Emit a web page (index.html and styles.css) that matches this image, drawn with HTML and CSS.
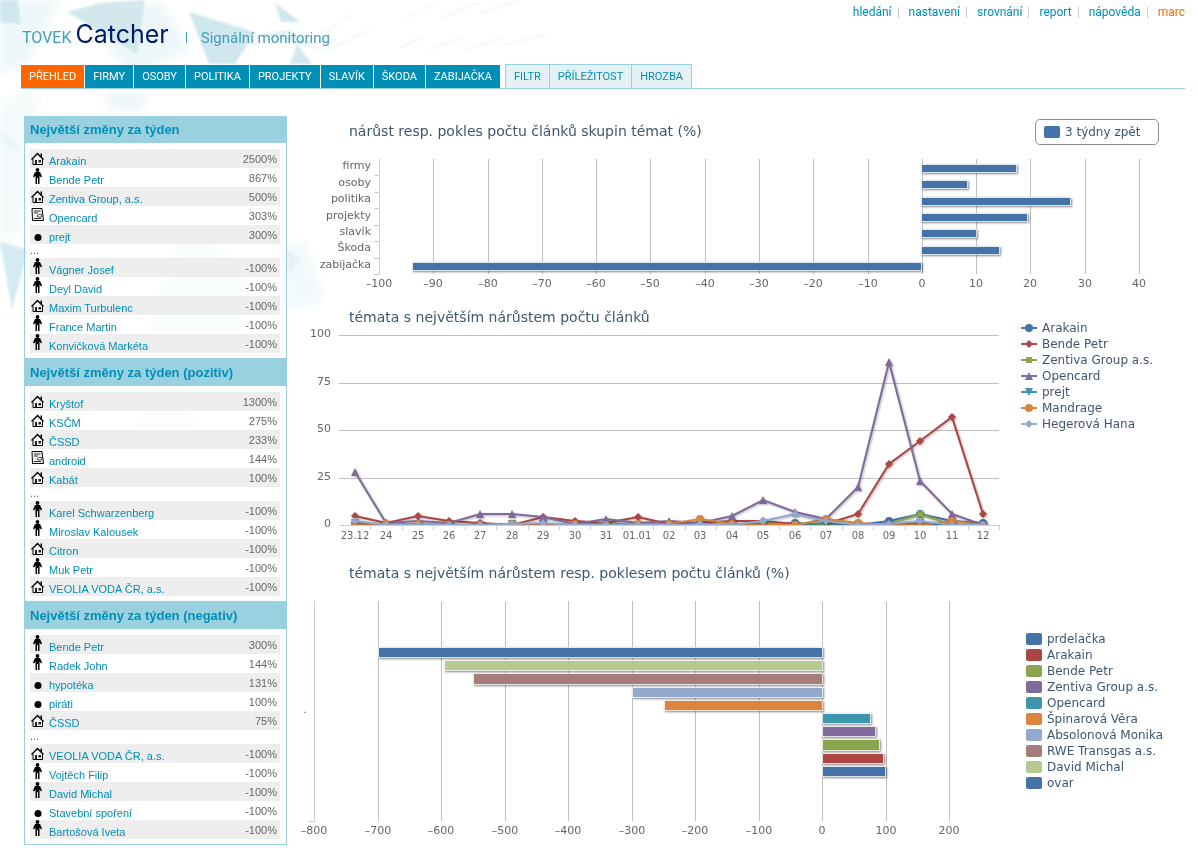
FILE: index.html
```html
<!DOCTYPE html>
<html lang="cs">
<head>
<meta charset="utf-8">
<title>TOVEK Catcher | Signální monitoring</title>
<link rel="stylesheet" href="styles.css">
</head>
<body>
<svg class="backdrop" width="640" height="520" viewBox="0 0 640 520" aria-hidden="true">
  <defs>
    <filter id="soft" x="-5%" y="-5%" width="110%" height="110%"><feGaussianBlur stdDeviation="1"/></filter>
    <filter id="haze" x="-20%" y="-20%" width="140%" height="140%"><feGaussianBlur stdDeviation="5"/></filter>
  </defs>
  <g filter="url(#haze)" fill="#edf7f9">
    <path d="M0 0H60L30 60L0 75Z"/>
    <path d="M90 25L160 0L190 50L130 75Z"/>
    <path d="M0 100L40 90L20 230L0 260Z" opacity=".6"/>
    <path d="M110 90L150 95L140 112L105 110Z"/>
    <path d="M286 245L305 240L325 300L286 312Z" opacity=".7"/>
    <path d="M180 225L250 270L240 330L150 330Z" opacity=".7"/>
    <path d="M20 400L75 370L90 430Z" opacity=".5"/>
    <path d="M130 430L170 370L200 430Z" opacity=".5"/>
  </g>
  <g filter="url(#soft)">
    <path d="M0 0H18L20 24L0 22Z" fill="#cfe7ed"/>
    <path d="M67 12L100 3L145 0L137 54Z" fill="#d2e8ed"/>
    <path d="M189 12L255 32L235 64H209Z" fill="#d0e7ed"/>
    <path d="M255 34L340 54L312 46L290 30Z" fill="#e4f1f5"/>
    <path d="M275 3L300 22L281 22Z" fill="#cfe7ed"/>
    <path d="M297 44L312 64H290Z" fill="#d2e8ee"/>
    <path d="M0 242L28 250L12 310Z" fill="#d4ebf1"/>
    <path d="M0 130L20 145L14 150L0 142Z" fill="#eaf5f8"/>
    <path d="M287 250L300 260L288 276Z" fill="#e2f2f6"/>
  </g>
  <g filter="url(#soft)" stroke="#f1f7f9" stroke-width="2">
    <path d="M320 35L350 15M330 50L370 30M406 19L434 3M442 18L478 2M480 13L520 0M400 48L422 37M430 49L462 38M466 49L504 38M503 46L546 34" fill="none"/>
  </g>
</svg>
<svg class="sprite" aria-hidden="true">
  <symbol id="house" viewBox="0 0 13 16">
    <path d="M9.500 4.500H11V9L9.500 7.500Z" fill="#000"/>
    <path d="M6.500 4.500L11.500 9.500V15.500H1.500V9.500Z" fill="#f4f4f4"/>
    <path d="M2 10V15.500H11.500V10" fill="none" stroke="#000"/>
    <path d="M0.500 10.500L6.500 4.500L12.500 10.500" fill="none" stroke="#000" stroke-width="1.500"/>
    <path d="M4 11H6V15.500H4ZM7.500 11H10V13.500H7.500Z" fill="#222"/>
  </symbol>
  <symbol id="person" viewBox="0 0 13 16">
    <circle cx="6.500" cy="2" r="1.900"/>
    <path d="M4 4H9L11 8.500L10 9.500L8.500 7.500V16H7V10H6V16H4.500V7.500L3 9.500L2 8.500Z"/>
  </symbol>
  <symbol id="paper" viewBox="0 0 13 16">
    <path d="M1 2.500H11L12.500 14.500H1.500Z" fill="#eee" stroke="#000"/>
    <path d="M3 5H9.500M3 7H7M3 12.500H10" stroke="#333" fill="none"/>
    <path d="M6 10L8 8.500H10.500V11H7Z" stroke="#555" fill="#fff"/>
  </symbol>
  <symbol id="dot" viewBox="0 0 13 16"><circle cx="7" cy="12.500" r="3.500"/></symbol>
</svg>

<header class="top">
  <nav class="menu" aria-label="Účet">
    <a href="#">hledání</a><a href="#">nastavení</a><a href="#">srovnání</a><a href="#">report</a><a href="#">nápověda</a><a href="#" class="user">marc</a>
  </nav>
  <div class="brand">
    <span class="maker">TOVEK</span><span class="product">Catcher</span><span class="bar"></span><span class="claim">Signální monitoring</span>
  </div>
  <nav class="tabs" aria-label="Témata">
    <a href="#" class="tab active">PŘEHLED</a><a href="#" class="tab">FIRMY</a><a href="#" class="tab">OSOBY</a><a href="#" class="tab">POLITIKA</a><a href="#" class="tab">PROJEKTY</a><a href="#" class="tab">SLAVÍK</a><a href="#" class="tab">ŠKODA</a><a href="#" class="tab">ZABIJAČKA</a>
    <div class="extra"><a href="#" class="tab light">FILTR</a><a href="#" class="tab light">PŘÍLEŽITOST</a><a href="#" class="tab light">HROZBA</a></div>
  </nav>
</header>

<main class="page">
  <aside class="side">
    <section>
      <h2>Největší změny za týden</h2>
      <table>
        <tbody>
        <tr><td><svg><use href="#house"/></svg></td><td><a href="#">Arakain</a></td><td>2500%</td></tr>
        <tr><td><svg><use href="#person"/></svg></td><td><a href="#">Bende Petr</a></td><td>867%</td></tr>
        <tr><td><svg><use href="#house"/></svg></td><td><a href="#">Zentiva Group, a.s.</a></td><td>500%</td></tr>
        <tr><td><svg><use href="#paper"/></svg></td><td><a href="#">Opencard</a></td><td>303%</td></tr>
        <tr><td><svg><use href="#dot"/></svg></td><td><a href="#">prejt</a></td><td>300%</td></tr>
        </tbody>
        <tbody class="more"><tr><td colspan="3">...</td></tr></tbody>
        <tbody>
        <tr><td><svg><use href="#person"/></svg></td><td><a href="#">Vágner Josef</a></td><td>-100%</td></tr>
        <tr><td><svg><use href="#person"/></svg></td><td><a href="#">Deyl David</a></td><td>-100%</td></tr>
        <tr><td><svg><use href="#house"/></svg></td><td><a href="#">Maxim Turbulenc</a></td><td>-100%</td></tr>
        <tr><td><svg><use href="#person"/></svg></td><td><a href="#">France Martin</a></td><td>-100%</td></tr>
        <tr><td><svg><use href="#person"/></svg></td><td><a href="#">Konvičková Markéta</a></td><td>-100%</td></tr>
        </tbody>
      </table>
    </section>
    <section>
      <h2>Největší změny za týden (pozitiv)</h2>
      <table>
        <tbody>
        <tr><td><svg><use href="#house"/></svg></td><td><a href="#">Kryštof</a></td><td>1300%</td></tr>
        <tr><td><svg><use href="#house"/></svg></td><td><a href="#">KSČM</a></td><td>275%</td></tr>
        <tr><td><svg><use href="#house"/></svg></td><td><a href="#">ČSSD</a></td><td>233%</td></tr>
        <tr><td><svg><use href="#paper"/></svg></td><td><a href="#">android</a></td><td>144%</td></tr>
        <tr><td><svg><use href="#house"/></svg></td><td><a href="#">Kabát</a></td><td>100%</td></tr>
        </tbody>
        <tbody class="more"><tr><td colspan="3">...</td></tr></tbody>
        <tbody>
        <tr><td><svg><use href="#person"/></svg></td><td><a href="#">Karel Schwarzenberg</a></td><td>-100%</td></tr>
        <tr><td><svg><use href="#person"/></svg></td><td><a href="#">Miroslav Kalousek</a></td><td>-100%</td></tr>
        <tr><td><svg><use href="#house"/></svg></td><td><a href="#">Citron</a></td><td>-100%</td></tr>
        <tr><td><svg><use href="#person"/></svg></td><td><a href="#">Muk Petr</a></td><td>-100%</td></tr>
        <tr><td><svg><use href="#house"/></svg></td><td><a href="#">VEOLIA VODA ČR, a.s.</a></td><td>-100%</td></tr>
        </tbody>
      </table>
    </section>
    <section>
      <h2>Největší změny za týden (negativ)</h2>
      <table>
        <tbody>
        <tr><td><svg><use href="#person"/></svg></td><td><a href="#">Bende Petr</a></td><td>300%</td></tr>
        <tr><td><svg><use href="#person"/></svg></td><td><a href="#">Radek John</a></td><td>144%</td></tr>
        <tr><td><svg><use href="#dot"/></svg></td><td><a href="#">hypotéka</a></td><td>131%</td></tr>
        <tr><td><svg><use href="#dot"/></svg></td><td><a href="#">piráti</a></td><td>100%</td></tr>
        <tr><td><svg><use href="#house"/></svg></td><td><a href="#">ČSSD</a></td><td>75%</td></tr>
        </tbody>
        <tbody class="more"><tr><td colspan="3">...</td></tr></tbody>
        <tbody>
        <tr><td><svg><use href="#house"/></svg></td><td><a href="#">VEOLIA VODA ČR, a.s.</a></td><td>-100%</td></tr>
        <tr><td><svg><use href="#person"/></svg></td><td><a href="#">Vojtěch Filip</a></td><td>-100%</td></tr>
        <tr><td><svg><use href="#person"/></svg></td><td><a href="#">David Michal</a></td><td>-100%</td></tr>
        <tr><td><svg><use href="#dot"/></svg></td><td><a href="#">Stavební spoření</a></td><td>-100%</td></tr>
        <tr><td><svg><use href="#person"/></svg></td><td><a href="#">Bartošová Iveta</a></td><td>-100%</td></tr>
        </tbody>
      </table>
    </section>
  </aside>

  <div class="charts">
    <section class="chart">
      <div class="chart-head">
        <h3>nárůst resp. pokles počtu článků skupin témat (%)</h3>
        <div class="key"><i class="swatch c1"></i>3 týdny zpět</div>
      </div>
      <svg class="plot" viewBox="0 0 885 142">
        <path class="grid" d="M133.500 9V124M188.500 9V124M242.500 9V124M296.500 9V124M350.500 9V124M405.500 9V124M459.500 9V124M513.500 9V124M568.500 9V124M622.500 9V124M676.500 9V124M730.500 9V124M785.500 9V124M839.500 9V124"/>
        <path class="axis" d="M79.500 9V124M74 25.500H79M74 42.500H79M74 58.500H79M74 75.500H79M74 91.500H79M74 108.500H79M74 124.500H80"/>
        <g class="bars c1">
          <rect x="621.500" y="14.500" width="95" height="8"/>
          <rect x="621.500" y="30.500" width="46" height="8"/>
          <rect x="621.500" y="47.500" width="149" height="8"/>
          <rect x="621.500" y="63.500" width="106" height="8"/>
          <rect x="621.500" y="79.500" width="55" height="8"/>
          <rect x="621.500" y="96.500" width="78" height="8"/>
          <rect x="112.500" y="112.500" width="509" height="8"/>
        </g>
        <g class="lbl end">
          <text x="71" y="19">firmy</text><text x="71" y="36">osoby</text><text x="71" y="52">politika</text><text x="71" y="69">projekty</text><text x="71" y="85">slavík</text><text x="71" y="101">Škoda</text><text x="71" y="118">zabijačka</text>
        </g>
        <g class="lbl mid">
          <text x="79" y="137">–100</text><text x="133" y="137">–90</text><text x="188" y="137">–80</text><text x="242" y="137">–70</text><text x="296" y="137">–60</text><text x="350" y="137">–50</text><text x="405" y="137">–40</text><text x="459" y="137">–30</text><text x="513" y="137">–20</text><text x="568" y="137">–10</text><text x="622" y="137">0</text><text x="676" y="137">10</text><text x="730" y="137">20</text><text x="785" y="137">30</text><text x="839" y="137">40</text>
        </g>
      </svg>
    </section>

    <section class="chart split">
      <div>
        <h3>témata s největším nárůstem počtu článků</h3>
        <svg class="plot" viewBox="0 0 712 218">
          <defs>
            <marker id="m1" markerUnits="userSpaceOnUse" markerWidth="10" markerHeight="10" refX="5" refY="5"><circle cx="5" cy="5" r="4" fill="#4572a7"/></marker>
            <marker id="m2" markerUnits="userSpaceOnUse" markerWidth="10" markerHeight="10" refX="5" refY="5"><path d="M5 1L9 5L5 9L1 5Z" fill="#aa4643"/></marker>
            <marker id="m3" markerUnits="userSpaceOnUse" markerWidth="10" markerHeight="10" refX="5" refY="5"><path d="M2 2H8V8H2Z" fill="#89a54e"/></marker>
            <marker id="m4" markerUnits="userSpaceOnUse" markerWidth="10" markerHeight="10" refX="5" refY="5"><path d="M5 1L9 9H1Z" fill="#80699b"/></marker>
            <marker id="m5" markerUnits="userSpaceOnUse" markerWidth="10" markerHeight="10" refX="5" refY="5"><path d="M1 1H9L5 9Z" fill="#3d96ae"/></marker>
            <marker id="m6" markerUnits="userSpaceOnUse" markerWidth="10" markerHeight="10" refX="5" refY="5"><circle cx="5" cy="5" r="4" fill="#db843d"/></marker>
            <marker id="m7" markerUnits="userSpaceOnUse" markerWidth="10" markerHeight="10" refX="5" refY="5"><path d="M5 1L9 5L5 9L1 5Z" fill="#92a8cd"/></marker>
            <clipPath id="area"><rect x="39" y="0" width="660" height="199"/></clipPath>
          </defs>
          <path class="grid" d="M39 8.500H699M39 56.500H699M39 103.500H699M39 151.500H699"/>
          <g class="lines" clip-path="url(#area)">
            <polyline class="s1" points="55,197 86,198 118,198 149,198 180,198 212,198 243,198 275,198 306,198 338,198 369,198 400,198 432,198 463,198 495,196 526,198 558,198 589,194 620,187 652,194 683,196"/>
            <polyline class="s2" points="55,189 86,196 118,189 149,194 180,196 212,198 243,190 275,194 306,196 338,190 369,197 400,196 432,194 463,194 495,197 526,197 558,187 589,137 620,114 652,90 683,187"/>
            <polyline class="s3" points="55,196 86,198 118,198 149,198 180,198 212,198 243,198 275,198 306,196 338,198 369,198 400,198 432,198 463,196 495,198 526,198 558,198 589,197 620,187 652,198 683,198"/>
            <polyline class="s4" points="55,145 86,196 118,194 149,196 180,187 212,187 243,190 275,197 306,192 338,196 369,194 400,196 432,189 463,173 495,185 526,192 558,160 589,35 620,154 652,187 683,198"/>
            <polyline class="s5" points="55,196 86,198 118,198 149,198 180,198 212,197 243,198 275,198 306,198 338,198 369,198 400,198 432,198 463,198 495,198 526,196 558,198 589,198 620,196 652,198 683,198"/>
            <polyline class="s6" points="55,198 86,197 118,197 149,198 180,198 212,197 243,198 275,197 306,198 338,197 369,197 400,192 432,197 463,198 495,198 526,192 558,196 589,198 620,198 652,194 683,198"/>
            <polyline class="s7" points="55,194 86,198 118,198 149,198 180,198 212,197 243,196 275,198 306,198 338,198 369,198 400,197 432,198 463,194 495,187 526,194 558,198 589,197 620,194 652,198 683,198"/>
          </g>
          <path class="axis" d="M39 198.500H700M70.500 199V203M102.500 199V203M133.500 199V203M165.500 199V203M196.500 199V203M228.500 199V203M259.500 199V203M290.500 199V203M322.500 199V203M353.500 199V203M385.500 199V203M416.500 199V203M448.500 199V203M479.500 199V203M510.500 199V203M542.500 199V203M573.500 199V203M605.500 199V203M636.500 199V203M668.500 199V203M699.500 199V203"/>
          <g class="lbl end">
            <text x="31" y="10">100</text><text x="31" y="58">75</text><text x="31" y="105">50</text><text x="31" y="153">25</text><text x="31" y="200">0</text>
          </g>
          <g class="lbl mid small">
            <text x="55" y="212">23.12</text><text x="86" y="212">24</text><text x="118" y="212">25</text><text x="149" y="212">26</text><text x="180" y="212">27</text><text x="212" y="212">28</text><text x="243" y="212">29</text><text x="275" y="212">30</text><text x="306" y="212">31</text><text x="337" y="212">01.01</text><text x="369" y="212">02</text><text x="400" y="212">03</text><text x="432" y="212">04</text><text x="463" y="212">05</text><text x="495" y="212">06</text><text x="526" y="212">07</text><text x="558" y="212">08</text><text x="589" y="212">09</text><text x="620" y="212">10</text><text x="652" y="212">11</text><text x="683" y="212">12</text>
          </g>
        </svg>
      </div>
      <ul class="legend series">
        <li><svg viewBox="0 0 16 10"><path class="s1" d="M0 5H8H16"/></svg>Arakain</li>
        <li><svg viewBox="0 0 16 10"><path class="s2" d="M0 5H8H16"/></svg>Bende Petr</li>
        <li><svg viewBox="0 0 16 10"><path class="s3" d="M0 5H8H16"/></svg>Zentiva Group a.s.</li>
        <li><svg viewBox="0 0 16 10"><path class="s4" d="M0 5H8H16"/></svg>Opencard</li>
        <li><svg viewBox="0 0 16 10"><path class="s5" d="M0 5H8H16"/></svg>prejt</li>
        <li><svg viewBox="0 0 16 10"><path class="s6" d="M0 5H8H16"/></svg>Mandrage</li>
        <li><svg viewBox="0 0 16 10"><path class="s7" d="M0 5H8H16"/></svg>Hegerová Hana</li>
      </ul>
    </section>

    <section class="chart split">
      <div>
        <h3>témata s největším nárůstem resp. poklesem počtu článků (%)</h3>
        <svg class="plot" viewBox="0 0 712 255">
          <path class="grid" d="M78.500 18V238M141.500 18V238M205.500 18V238M268.500 18V238M332.500 18V238M395.500 18V238M459.500 18V238M522.500 18V238M586.500 18V238M649.500 18V238"/>
          <path class="axis" d="M14.500 18V238M9 238.500H15"/>
          <g class="bars">
            <rect class="c1" x="78.500" y="64.500" width="444" height="10"/>
            <rect class="c9" x="144.500" y="77.500" width="378" height="10"/>
            <rect class="c8" x="173.500" y="90.500" width="349" height="11"/>
            <rect class="c7" x="332.500" y="104.500" width="190" height="10"/>
            <rect class="c6" x="364.500" y="117.500" width="158" height="10"/>
            <rect class="c5" x="522.500" y="130.500" width="48" height="10"/>
            <rect class="c4" x="522.500" y="143.500" width="53" height="10"/>
            <rect class="c3" x="522.500" y="156.500" width="57" height="11"/>
            <rect class="c2" x="522.500" y="170.500" width="61" height="10"/>
            <rect class="c1" x="522.500" y="183.500" width="63" height="10"/>
          </g>
          <g class="lbl mid">
            <text x="5" y="130">.</text>
            <text x="14" y="251">–800</text><text x="78" y="251">–700</text><text x="141" y="251">–600</text><text x="205" y="251">–500</text><text x="268" y="251">–400</text><text x="332" y="251">–300</text><text x="395" y="251">–200</text><text x="459" y="251">–100</text><text x="522" y="251">0</text><text x="586" y="251">100</text><text x="649" y="251">200</text>
          </g>
        </svg>
      </div>
      <ul class="legend blocks">
        <li><i class="swatch c1"></i>prdelačka</li>
        <li><i class="swatch c2"></i>Arakain</li>
        <li><i class="swatch c3"></i>Bende Petr</li>
        <li><i class="swatch c4"></i>Zentiva Group a.s.</li>
        <li><i class="swatch c5"></i>Opencard</li>
        <li><i class="swatch c6"></i>Špinarová Věra</li>
        <li><i class="swatch c7"></i>Absolonová Monika</li>
        <li><i class="swatch c8"></i>RWE Transgas a.s.</li>
        <li><i class="swatch c9"></i>David Michal</li>
        <li><i class="swatch c1"></i>ovar</li>
      </ul>
    </section>
  </div>
</main>
</body>
</html>
```
FILE: styles.css
```css
* { box-sizing: border-box; }
body {
  margin: 0;
  padding: 0 13px 12px 21px;
  background: #fff;
  color: #666;
  font: 11px/13px "Liberation Sans", Arial, sans-serif;
}
a { color: #008fb6; text-decoration: none; }
h2, h3, ul { margin: 0; padding: 0; font-weight: normal; }
ul { list-style: none; }

.backdrop { position: absolute; left: 0; top: 0; z-index: -1; }
.sprite { position: absolute; width: 0; height: 0; }

/* header */
.menu {
  display: flex;
  justify-content: flex-end;
  height: 24px;
  font: 12px/24px Roboto, sans-serif;
}
.menu a { display: flex; align-items: center; }
.menu a:not(.user)::after {
  content: "";
  width: 1px;
  height: 11px;
  margin: 0 10px 0 6px;
  background: #ccc;
}
.menu .user { color: #f60; }

.brand {
  display: flex;
  align-items: baseline;
  height: 40px;
  line-height: 20px;
  padding-left: 1px;
  color: #3f9fba;
  font-family: Roboto, sans-serif;
}
.maker { font-size: 16px; }
.product { margin-left: 4px; font-family: Inter, sans-serif; font-size: 25px; color: #001a66; }
.bar { width: 1px; height: 11px; margin: 0 14px 0 17px; background: #3f9fba; }
.claim { font-size: 15px; }

.tabs {
  display: flex;
  align-items: flex-end;
  gap: 1px;
  height: 25px;
  border-bottom: 1px solid #9ad1e0;
}
.tab {
  padding: 0 8px;
  background: #008fb6;
  color: #fff;
  font: 11px/23px Roboto, sans-serif;
}
.tab.active { background: #f60; }
.extra {
  display: flex;
  margin-left: 4px;
  border: solid #9ad1e0;
  border-width: 1px 0 0 1px;
}
.tab.light {
  border-right: 1px solid #9ad1e0;
  background: #e4f2f6;
  color: #008fb6;
}

/* page body */
.page {
  display: grid;
  grid-template-columns: 263px 1fr;
  gap: 13px;
  padding: 27px 0 0 3px;
}
.side {
  align-self: start;
  border: solid #9ad1e0;
  border-width: 0 1px 1px;
  background: rgba(255, 255, 255, .5);
}
.side section { padding-bottom: 5px; }
.side section + section { border-top: 1px solid #9ad1e0; }
.side h2 {
  margin-bottom: 6px;
  padding-left: 5px;
  background: #9ad1e0;
  color: #008fb6;
  font-size: 13px;
  line-height: 27px;
  font-weight: bold;
}
.side table { width: 250px; margin-left: 5px; border-collapse: collapse; }
.side td { height: 19px; padding: 0; vertical-align: top; }
.side tbody:not(.more) tr:nth-child(odd) { background: #eee; }
.side td:nth-child(1) { width: 19px; padding-left: 1px; }
.side td:nth-child(2) { padding-top: 6px; }
.side td:nth-child(3) { padding: 4px 3px 0 0; text-align: right; }
.side td svg { display: block; width: 13px; height: 16px; }
.side .more td { height: 14px; padding: 0; }

/* charts */
.charts { font: 12px/16px "DejaVu Sans", sans-serif; color: #3e576f; }
.chart h3 { padding-left: 49px; font-size: 14px; line-height: 20px; }
.chart { margin-bottom: 18px; }
.chart:first-child { margin-bottom: 15px; }
.chart:last-child { margin-bottom: 0; }
.chart-head {
  display: flex;
  justify-content: space-between;
  align-items: center;
  margin: 3px 26px 5px 0;
}
.chart-head h3 { margin-bottom: 2px; }
.key {
  display: flex;
  align-items: center;
  gap: 5px;
  min-width: 124px;
  height: 26px;
  padding: 0 8px;
  border: 1px solid #909090;
  border-radius: 5px;
  background: #fff;
}
.split { display: grid; grid-template-columns: 1fr 165px; gap: 8px; }
.plot { display: block; width: 100%; height: auto; overflow: visible; }
.legend li { display: flex; align-items: center; gap: 5px; white-space: nowrap; }
.legend svg { width: 16px; height: 10px; }
.series { padding: 13px 0 0 1px; }
.blocks { padding: 68px 0 0 6px; }
.swatch { width: 16px; height: 12px; border-radius: 2px; background: currentColor; }

.c1 { color: #4572a7; }
.c2 { color: #aa4643; }
.c3 { color: #89a54e; }
.c4 { color: #80699b; }
.c5 { color: #3d96ae; }
.c6 { color: #db843d; }
.c7 { color: #92a8cd; }
.c8 { color: #a47d7c; }
.c9 { color: #b5ca92; }

.grid { stroke: #c0c0c0; fill: none; }
.axis { stroke: #c0d0e0; fill: none; }
.bars rect {
  fill: currentColor;
  stroke: rgba(255, 255, 255, .75);
  filter: drop-shadow(1px 1px 1px rgba(0, 0, 0, .5));
}

.lines polyline { filter: drop-shadow(1px 1px 1px rgba(0, 0, 0, .3)); }
.lines polyline, .series path { fill: none; stroke-width: 2; }
.s1 { stroke: #4572a7; marker-mid: url(#m1); }
.s2 { stroke: #aa4643; marker-mid: url(#m2); }
.s3 { stroke: #89a54e; marker-mid: url(#m3); }
.s4 { stroke: #80699b; marker-mid: url(#m4); }
.s5 { stroke: #3d96ae; marker-mid: url(#m5); }
.s6 { stroke: #db843d; marker-mid: url(#m6); }
.s7 { stroke: #92a8cd; marker-mid: url(#m7); }
.lines .s1 { marker: url(#m1); }
.lines .s2 { marker: url(#m2); }
.lines .s3 { marker: url(#m3); }
.lines .s4 { marker: url(#m4); }
.lines .s5 { marker: url(#m5); }
.lines .s6 { marker: url(#m6); }
.lines .s7 { marker: url(#m7); }

.lbl { fill: #666; font-size: 11px; }
.lbl.small { font-size: 10px; }
.lbl.end { text-anchor: end; }
.lbl.mid { text-anchor: middle; }
```
